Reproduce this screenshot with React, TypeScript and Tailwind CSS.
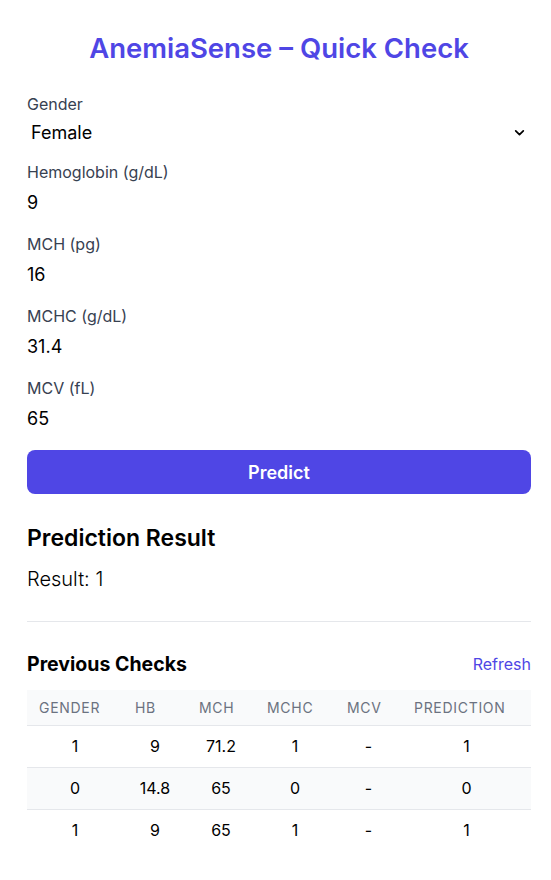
import React from "react";

const rows = [
  ["1", "9", "71.2", "1", "-", "1"],
  ["0", "14.8", "65", "0", "-", "0"],
  ["1", "9", "65", "1", "-", "1"],
];

function Field({ label, value }: { label: string; value: string }) {
  return (
    <div className="flex flex-col">
      <label className="h-5 text-[16px] leading-5 text-[#374151]">{label}</label>
      <div className="flex h-10 items-center text-[18px] text-black">{value}</div>
    </div>
  );
}

export default function App() {
  return (
    <div className="min-h-[880px] bg-white font-['Inter',sans-serif] text-black">
      <div className="ml-[27px] w-[504px] pt-[30px]">
        <h1 className="text-center text-[27.5px] font-semibold leading-9 text-[#4f46e5]">
          AnemiaSense – Quick Check
        </h1>
        <div className="mt-[28px] flex flex-col gap-3">
          <div className="flex flex-col">
            <label className="h-5 text-[16px] leading-5 text-[#374151]">Gender</label>
            <div className="flex h-9 items-center justify-between pl-1 pr-[5px] text-[18px]">
              <span>Female</span>
              <svg width="13" height="13" viewBox="0 0 24 24" fill="none" stroke="black" strokeWidth="3.2" strokeLinecap="round" strokeLinejoin="round">
                <path d="M5 9l7 7 7-7" />
              </svg>
            </div>
          </div>
          <Field label="Hemoglobin (g/dL)" value="9" />
          <Field label="MCH (pg)" value="16" />
          <Field label="MCHC (g/dL)" value="31.4" />
          <Field label="MCV (fL)" value="65" />
        </div>
        <button className="mt-3 flex h-11 w-full items-center justify-center rounded-lg bg-[#4f46e5] text-[18px] font-semibold text-white">
          Predict
        </button>
        <h2 className="mt-[28px] text-[23px] font-semibold leading-8">Prediction Result</h2>
        <p className="mt-[11px] text-[20px] font-light leading-7">Result: 1</p>
        <div className="mt-[28px] border-t border-[#e5e7eb]" />
        <div className="mt-[30px] flex items-center justify-between">
          <h3 className="text-[19.5px] font-bold leading-6">Previous Checks</h3>
          <span className="text-[16px] text-[#4f46e5]">Refresh</span>
        </div>
        <table className="mt-[14px] w-full table-fixed border-collapse">
          <colgroup>
            <col className="w-[96px]" />
            <col className="w-[64px]" />
            <col className="w-[68px]" />
            <col className="w-[80px]" />
            <col className="w-[67px]" />
            <col />
          </colgroup>
          <thead>
            <tr className="h-[35px] border-b border-[#e5e7eb] bg-[#f9fafb]">
              {["Gender", "Hb", "MCH", "MCHC", "MCV", "Prediction"].map((h) => (
                <th key={h} className="px-3 text-left text-[14px] font-normal uppercase tracking-wider text-[#6b7280]">
                  {h}
                </th>
              ))}
            </tr>
          </thead>
          <tbody>
            {rows.map((r, i) => (
              <tr key={i} className={`h-[42px] ${i < 2 ? "border-b border-[#e5e7eb]" : ""} ${i === 1 ? "bg-[#f9fafb]" : ""}`}>
                {r.map((c, j) => (
                  <td key={j} className="text-center text-[16px]">
                    {c}
                  </td>
                ))}
              </tr>
            ))}
          </tbody>
        </table>
      </div>
    </div>
  );
}
